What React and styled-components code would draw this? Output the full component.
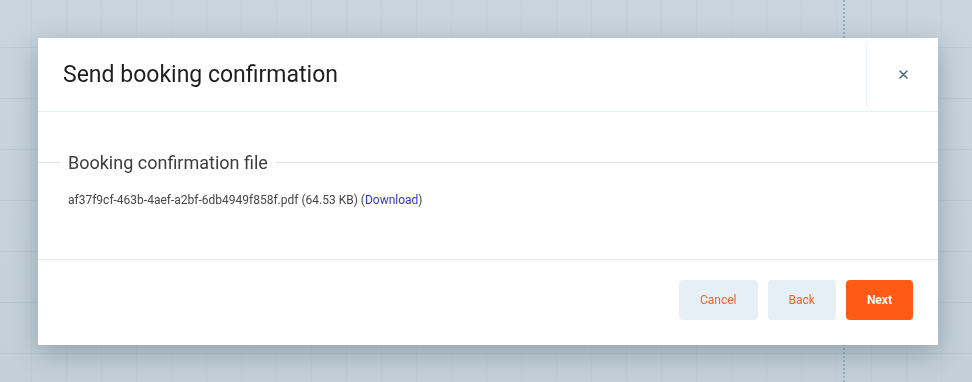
import React from 'react';
import styled, { createGlobalStyle } from 'styled-components';

const GlobalStyle = createGlobalStyle`
  html, body {
    margin: 0;
    padding: 0;
    height: 100%;
  }
  body {
    font-family: Roboto, "Liberation Sans", Arial, sans-serif;
    overflow: hidden;
  }
`;

// Calendar grid behind the overlay
const Backdrop = styled.div`
  width: 972px;
  height: 382px;
  background-color: #c7d3dc;
  background-image:
    repeating-linear-gradient(
      to bottom,
      transparent 0,
      transparent 46px,
      rgba(150, 168, 186, 0.22) 46px,
      rgba(150, 168, 186, 0.22) 47px,
      transparent 47px,
      transparent 51px
    ),
    repeating-linear-gradient(
      to right,
      transparent 0,
      transparent 31px,
      rgba(160, 178, 194, 0.14) 31px,
      rgba(160, 178, 194, 0.14) 32px,
      transparent 32px,
      transparent 35px
    ),
    linear-gradient(to bottom, #c9d5de 0%, #c3d0d8 100%);
  background-position: 0 1px, 0 0, 0 0;
`;

const NowLine = styled.div`
  position: absolute;
  left: 843px;
  top: 0;
  height: 382px;
  width: 0;
  border-left: 2px dotted #8fb3cf;
`;

const Overlay = styled.div`
  position: fixed;
  inset: 0;
  padding: 38px 0 0 38px;
`;

const Modal = styled.div`
  width: 900px;
  background: #ffffff;
  box-shadow: 0 8px 26px rgba(40, 62, 74, 0.32);
  display: flex;
  flex-direction: column;
`;

const Header = styled.div`
  display: flex;
  align-items: stretch;
  height: 73px;
  border-bottom: 1px solid #e6edf3;
`;

const Title = styled.h2`
  flex: 1;
  margin: 0;
  padding: 0 0 0 25px;
  display: flex;
  align-items: center;
  font-size: 23px;
  font-weight: 400;
  color: #1f1f1f;
`;

const CloseButton = styled.button`
  width: 72px;
  margin: 2px 0 2px;
  border: none;
  border-left: 1px solid #e6edf3;
  border-radius: 6px 0 0 6px;
  background: transparent;
  display: flex;
  align-items: center;
  justify-content: center;
  padding: 0 0 0 2px;
  cursor: pointer;
`;

const Body = styled.div`
  padding: 40px 0 52px;
`;

const Fieldset = styled.fieldset`
  margin: 0;
  padding: 0 30px;
  border: none;
  border-top: 1px solid #dfe4e9;
  min-width: 0;
`;

const Legend = styled.legend`
  margin-left: -8px;
  padding: 0 8px;
  font-size: 18px;
  color: #3d3d3d;
`;

const FileLine = styled.p`
  margin: 20px 0 0;
  font-size: 12px;
  color: #454545;
`;

const Link = styled.a`
  color: #3434d8;
  text-decoration: none;
`;

const Footer = styled.div`
  display: flex;
  justify-content: flex-end;
  gap: 10px;
  padding: 20px 25px 25px;
  border-top: 1px solid #e7ebef;
`;

const Button = styled.button`
  height: 40px;
  padding: 0 21px;
  border: none;
  border-radius: 4px;
  font-family: Roboto, "Liberation Sans", Arial, sans-serif;
  font-size: 12px;
  font-weight: ${(p) => (p.$primary ? 700 : 400)};
  background: ${(p) => (p.$primary ? '#ff5a16' : '#e7eff6')};
  color: ${(p) => (p.$primary ? '#ffffff' : '#f2632a')};
  cursor: pointer;
`;

const CloseIcon = () => (
  <svg width="9" height="9" viewBox="0 0 9 9">
    <path d="M1 1 L8 8 M8 1 L1 8" stroke="#4f6f85" strokeWidth="1.6" strokeLinecap="round" />
  </svg>
);

export default function App() {
  return (
    <>
      <GlobalStyle />
      <Backdrop />
      <NowLine />
      <Overlay>
        <Modal>
          <Header>
            <Title>Send booking confirmation</Title>
            <CloseButton aria-label="Close">
              <CloseIcon />
            </CloseButton>
          </Header>
          <Body>
            <Fieldset>
              <Legend>Booking confirmation file</Legend>
              <FileLine>
                af37f9cf-463b-4aef-a2bf-6db4949f858f.pdf (64.53 KB) (<Link href="#">Download</Link>)
              </FileLine>
            </Fieldset>
          </Body>
          <Footer>
            <Button>Cancel</Button>
            <Button>Back</Button>
            <Button $primary>Next</Button>
          </Footer>
        </Modal>
      </Overlay>
    </>
  );
}
